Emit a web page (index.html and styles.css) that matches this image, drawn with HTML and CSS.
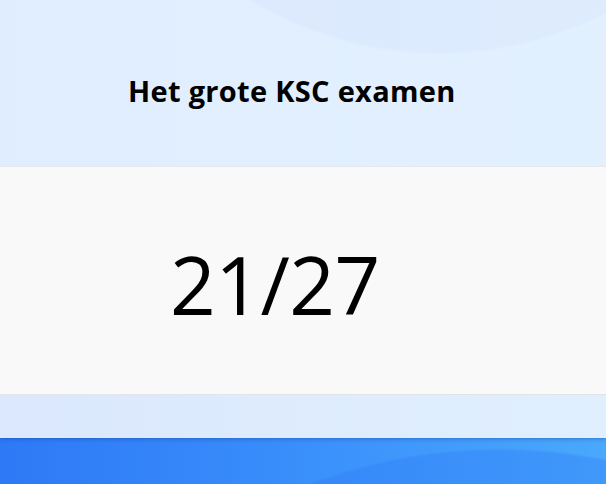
FILE: index.html
```html
<!DOCTYPE html>
<html lang="nl">
<head>
<meta charset="utf-8">
<title>Het grote KSC examen</title>
<link rel="stylesheet" href="styles.css">
</head>
<body>
<div class="window">
  <header class="header">
    <h1 class="title">Het grote KSC examen</h1>
  </header>
  <main class="panel">
    <div class="score">21/27</div>
  </main>
  <footer class="footer"></footer>
</div>
<div class="desktop"></div>
</body>
</html>
```
FILE: styles.css
```css
html, body {
  margin: 0;
  padding: 0;
}
body {
  width: 606px;
  height: 484px;
  overflow: hidden;
  font-family: "Open Sans", "Noto Sans", sans-serif;
  background: #3a8cfa;
  display: flex;
  flex-direction: column;
}
.window {
  display: flex;
  flex-direction: column;
  background: linear-gradient(90deg, #dbe8fd 0%, #e0effe 100%);
  position: relative;
  z-index: 1;
  box-shadow: 0 1px 4px rgba(0, 40, 120, 0.35);
}
.header {
  height: 167px;
  box-sizing: border-box;
  border-bottom: 1px solid #e6e8ec;
  display: flex;
  align-items: flex-start;
  padding-left: 128px;
  background: radial-gradient(ellipse 360px 355px at 440px -300px, rgba(220,233,253,0.6) 0%, rgba(220,233,253,0.6) 99%, rgba(228,242,255,0.5) 100%);
}
.title {
  margin: 0;
  margin-top: 73px;
  font-size: 29px;
  font-weight: 700;
  color: #000;
  line-height: 36px;
  letter-spacing: 0.3px;
}
.panel {
  height: 228px;
  box-sizing: border-box;
  background: #f9f9f9;
  border-bottom: 1px solid #e3e4e6;
  display: flex;
  padding-left: 170px;
}
.score {
  margin-top: 62px;
  font-size: 80px;
  line-height: 110px;
  font-weight: 400;
  color: #000;
  letter-spacing: -0.5px;
}
.footer {
  height: 43px;
}
.desktop {
  flex: 1;
  background:
    radial-gradient(ellipse 420px 320px at 500px 330px, rgba(46,121,246,0.35) 0%, rgba(46,121,246,0.35) 99%, rgba(46,121,246,0) 100%),
    linear-gradient(90deg, #2e79f6 0%, #3a8ffb 50%, #4aa9fb 100%);
}
```
